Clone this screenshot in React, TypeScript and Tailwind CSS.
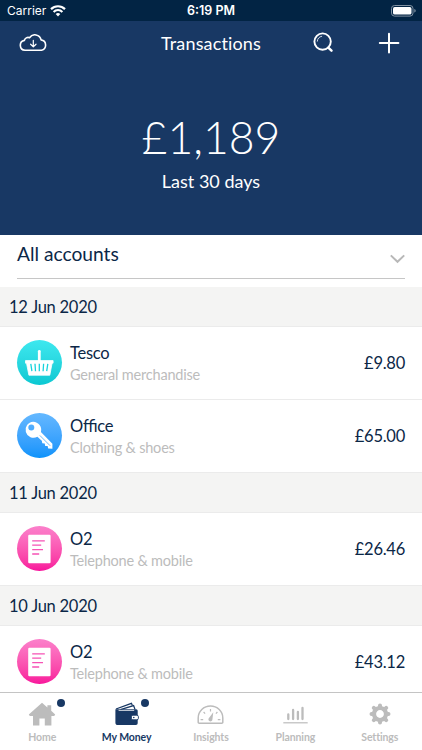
import type { ReactNode } from "react";
import { clsx } from "clsx";

type Category = "basket" | "key" | "bill";

interface Transaction {
	name: string;
	category: string;
	amount: string;
	icon: Category;
}

const days: { date: string; items: Transaction[] }[] = [
	{
		date: "12 Jun 2020",
		items: [
			{ name: "Tesco", category: "General merchandise", amount: "£9.80", icon: "basket" },
			{ name: "Office", category: "Clothing & shoes", amount: "£65.00", icon: "key" },
		],
	},
	{
		date: "11 Jun 2020",
		items: [{ name: "O2", category: "Telephone & mobile", amount: "£26.46", icon: "bill" }],
	},
	{
		date: "10 Jun 2020",
		items: [{ name: "O2", category: "Telephone & mobile", amount: "£43.12", icon: "bill" }],
	},
];

const BasketIcon = () => (
	<svg width="45" height="45" viewBox="0 0 45 45" fill="none">
		<path d="M22.3 11.3v11" stroke="#fff" strokeWidth="2.8" strokeLinecap="round" />
		<path d="M8.5 20.6h27.6v2.6h-1l-2.3 12H11.9L9.5 23.2h-1z" fill="#fff" stroke="#fff" strokeWidth="0.8" strokeLinejoin="round" />
		<path d="M13.8 23.8l1.1 7.4M18 23.8l.5 7.4M22.3 23.8v7.4M26.6 23.8l-.5 7.4M30.8 23.8l-1.1 7.4" stroke="#16d3dc" strokeWidth="1.3" />
	</svg>
);

const KeyIcon = () => (
	<svg width="45" height="45" viewBox="0 0 45 45" fill="none">
		<path
			fillRule="evenodd"
			d="M16.2 8.8a8 8 0 0 1 7.7 10.2L35.4 30.7V35.8L31.2 35.4 30.6 33 28.2 32.9 27.7 30.4 25.3 30.2 24.8 27.8 20.4 23.8A8 8 0 1 1 16.2 8.8zM14.3 11.6a3 3 0 1 0 0 6 3 3 0 0 0 0-6z"
			fill="#fff"
		/>
		<path d="M22.8 22.4l10.4 10.4" stroke="#46a9fb" strokeWidth="0.8" />
	</svg>
);

const BillIcon = () => (
	<svg width="45" height="45" viewBox="0 0 45 45" fill="none">
		<rect x="11.2" y="8.8" width="22.4" height="28.4" rx="1.2" fill="#fff" />
		<path d="M15.2 14.8h12.6M15.2 19.2h9M15.2 23.6h10.8M15.2 28h7" stroke="#f652b5" strokeWidth="1.3" />
	</svg>
);

const icons: Record<Category, ReactNode> = {
	basket: <BasketIcon />,
	key: <KeyIcon />,
	bill: <BillIcon />,
};

const StatusBar = () => (
	<div className="grid h-[21px] shrink-0 grid-cols-3 items-center bg-[#022444] pt-px text-[12.5px] leading-none text-white">
		<div className="flex items-center gap-[4px] pl-[7px] font-[Inter,sans-serif] text-[12px]">
			<span>Carrier</span>
			<svg width="16" height="12" viewBox="0 0 16 12" fill="none" stroke="#fff">
				<path d="M1 4.1a10 10 0 0 1 14 0" strokeWidth="2.2" />
				<path d="M3.6 6.9a6.2 6.2 0 0 1 8.8 0" strokeWidth="2.1" />
				<path d="M8 11.4L5.7 9a3.3 3.3 0 0 1 4.6 0z" fill="#fff" stroke="none" />
			</svg>
		</div>
		<span className="text-center font-[Inter,sans-serif] font-semibold whitespace-nowrap">6:19 PM</span>
		<div className="flex justify-end pr-[6px]">
			<svg width="25" height="12" viewBox="0 0 25 12" fill="none">
				<rect x="0.5" y="0.5" width="21.5" height="10.6" rx="3" stroke="#8091a2" />
				<rect x="2" y="2" width="18.5" height="7.6" rx="1.7" fill="#fff" />
				<path d="M23.3 4v3.6c1-.3 1.4-1 1.4-1.8s-.4-1.5-1.4-1.8z" fill="#8091a2" />
			</svg>
		</div>
	</div>
);

const Header = () => (
	<header className="flex h-[214px] shrink-0 flex-col bg-[#183864] text-white">
		<div className="grid h-[44px] grid-cols-[1fr_auto_1fr] items-center">
			<svg className="ml-[18px]" width="30" height="18" viewBox="0 0 30 18" fill="none" stroke="#fff" strokeWidth="1.6" strokeLinecap="round" strokeLinejoin="round">
				<path d="M7 16.3a5 5 0 0 1-.6-9.9 3.8 3.8 0 0 1 5.1-2.7 6.4 6.4 0 0 1 11.6 2.2 5.3 5.3 0 0 1 .4 10.4z" />
				<path d="M15.3 6.4v6.3M12.6 10.2l2.7 2.6 2.7-2.6" strokeWidth="1.2" />
			</svg>
			<h1 className="text-[18px] tracking-[0.15px] [font-variant-ligatures:none]">Transactions</h1>
			<div className="flex items-center justify-end gap-[44px] pr-[22px]">
				<svg className="mb-px" width="21" height="21" viewBox="0 0 21 21" fill="none" stroke="#fff">
					<circle cx="9.6" cy="9.6" r="8.2" strokeWidth="1.9" />
					<path d="M4.3 9.2a5.4 5.4 0 0 1 4.4-4.9" strokeWidth="0.8" strokeLinecap="round" />
					<path d="M15.3 15.6l3.2 3" strokeWidth="2.5" strokeLinecap="round" />
				</svg>
				<svg width="22" height="22" viewBox="0 0 22 22" stroke="#fff" strokeWidth="2" strokeLinecap="round">
					<path d="M11 1.8v18.6M1.8 11h18.6" />
				</svg>
			</div>
		</div>
		<div className="flex flex-col items-center pt-[45px]">
			<span className="text-[44.5px] leading-[54px] font-light">£1,189</span>
			<span className="mt-[4px] text-[18px] leading-[26px]">Last 30 days</span>
		</div>
	</header>
);

const AccountPicker = () => (
	<div className="h-[52px] shrink-0 px-[17px]">
		<button className="flex h-[44px] w-full items-center justify-between border-b border-[#c6c6c6]">
			<span className="pb-[4px] text-[19.2px]">All accounts</span>
			<svg className="mt-[5px]" width="15" height="10" viewBox="0 0 15 10" fill="none" stroke="#b8b8b8" strokeWidth="2">
				<path d="M0.8 1.4l6.7 6.4L14.2 1.4" />
			</svg>
		</button>
	</div>
);

const TransactionRow = ({ item }: { item: Transaction }) => (
	<li className="flex h-[73px] items-center border-b border-[#ebebeb] pr-[17px] pb-px pl-[17px]">
		<div
			className={clsx(
				"mb-px size-[45px] shrink-0 overflow-hidden rounded-full bg-linear-to-b",
				item.icon === "basket" && "from-[#3de8ef] to-[#08c8d2]",
				item.icon === "key" && "from-[#64b8ff] to-[#0893fb]",
				item.icon === "bill" && "from-[#fb80cb] to-[#f8129c]",
			)}
		>
			{icons[item.icon]}
		</div>
		<div className="ml-[8px] flex flex-col pt-[2px]">
			<span className="text-[16.5px] leading-[21px] tracking-[-0.25px] [font-feature-settings:'liga']">{item.name}</span>
			<span className="text-[14.5px] leading-[21px] tracking-[-0.2px] text-[#bcbcbc]">{item.category}</span>
		</div>
		<span className="ml-auto pt-[2px] text-[16.5px] tracking-[-0.25px]">{item.amount}</span>
	</li>
);

const tabs: { label: string; active?: boolean; dot?: boolean; icon: ReactNode }[] = [
	{
		label: "Home",
		dot: true,
		icon: (
			<svg width="28" height="24" viewBox="0 0 28 24" fill="currentColor">
				<path d="M14 0.8l5.4 4.7V3.2h3.8v5.6L27.2 12.4l-1 1.6h-2.8V23.5h-6.6v-7h-5.4v7H5V14H1.8l-1-1.6z" />
			</svg>
		),
	},
	{
		label: "My Money",
		active: true,
		dot: true,
		icon: (
			<svg width="26" height="24" viewBox="0 0 26 24" fill="none">
				<path d="M1.4 7.2h20.8a1.5 1.5 0 0 1 1.5 1.5v12.6a1.8 1.8 0 0 1-1.8 1.8H4A2.6 2.6 0 0 1 1.4 20.5z" fill="currentColor" />
				<path d="M2 7L17.4 1.3l1 2.2" stroke="currentColor" strokeWidth="1.3" />
				<path d="M6.4 7.6L19.6 3.6l1.4 3.8" stroke="currentColor" strokeWidth="1.3" />
				<path d="M4.6 8.4h15.6" stroke="#fff" strokeWidth="0.8" />
				<rect x="17.4" y="13.2" width="7" height="4.6" rx="1.5" fill="#fff" stroke="currentColor" strokeWidth="0.9" />
				<circle cx="19.8" cy="15.5" r="0.8" fill="currentColor" />
			</svg>
		),
	},
	{
		label: "Insights",
		icon: (
			<svg className="mt-[2px]" width="27" height="20" viewBox="0 0 27 20" fill="none" stroke="currentColor">
				<path d="M2.3 18.3a1 1 0 0 1-1.1-1v-4.4a12.3 11.8 0 0 1 24.6 0v4.4a1 1 0 0 1-1.1 1z" strokeWidth="1.5" />
				<path d="M13.5 4v2.6M6.6 7l1.5 1.6M20.4 7l-1.5 1.6M3.6 14.6h2.6M20.8 14.6h2.6" strokeWidth="1.2" />
				<path d="M16.3 7.2l-.9 7.2a2 2 0 1 1-3.6-1.2z" fill="currentColor" stroke="none" />
			</svg>
		),
	},
	{
		label: "Planning",
		icon: (
			<svg className="mt-[2px]" width="25" height="18" viewBox="0 0 25 18" fill="none" stroke="currentColor">
				<path d="M5.3 8.5v4.5M10.1 3.9v9.1M14.9 5.9v7.1M19.5 2v11" strokeWidth="2.3" strokeLinecap="round" />
				<path d="M0.3 16.8h24.4" strokeWidth="1.2" />
			</svg>
		),
	},
	{
		label: "Settings",
		icon: (
			<svg width="22" height="22" viewBox="-11 -11 22 22" fill="none" stroke="currentColor">
				<circle r="6" strokeWidth="4.2" />
				<path d="M0-7.5v-1M0 7.5v1M-7.5 0h-1M7.5 0h1M-5.3-5.3l-.9-.9M5.3 5.3l.9.9M-5.3 5.3l-.9.9M5.3-5.3l.9-.9" strokeWidth="4" strokeLinecap="round" />
			</svg>
		),
	},
];

const TabBar = () => (
	<nav className="grid h-[58px] shrink-0 grid-cols-5 border-t border-[#c4c4c4] bg-white">
		{tabs.map((tab) => (
			<div
				key={tab.label}
				className={clsx(
					"flex flex-col items-center text-[10.5px] font-bold tracking-[-0.1px]",
					tab.active ? "text-[#183864]" : "text-[#bcbcbc]",
				)}
			>
				<div className="relative flex h-[36px] w-[45px] items-center justify-center pt-[6px]">
					{tab.icon}
					{tab.dot && <span className="absolute top-[6px] right-0 size-[8px] rounded-full bg-[#183864]" />}
				</div>
				<span className="leading-[16px]">{tab.label}</span>
			</div>
		))}
	</nav>
);

export default function App() {
	return (
		<div className="flex h-[750px] w-[422px] flex-col overflow-hidden bg-white font-[Lato,sans-serif] text-[#0b2747]">
			<StatusBar />
			<Header />
			<AccountPicker />
			<main className="min-h-0 flex-1 overflow-hidden">
				{days.map((day) => (
					<section key={day.date}>
						<h2 className="flex h-[40px] items-center border-b border-[#ebebeb] bg-[#f4f4f3] pt-[2px] pl-[9px] text-[16.5px] tracking-[-0.25px]">
							{day.date}
						</h2>
						<ul>
							{day.items.map((item) => (
								<TransactionRow key={item.name} item={item} />
							))}
						</ul>
					</section>
				))}
			</main>
			<TabBar />
		</div>
	);
}
